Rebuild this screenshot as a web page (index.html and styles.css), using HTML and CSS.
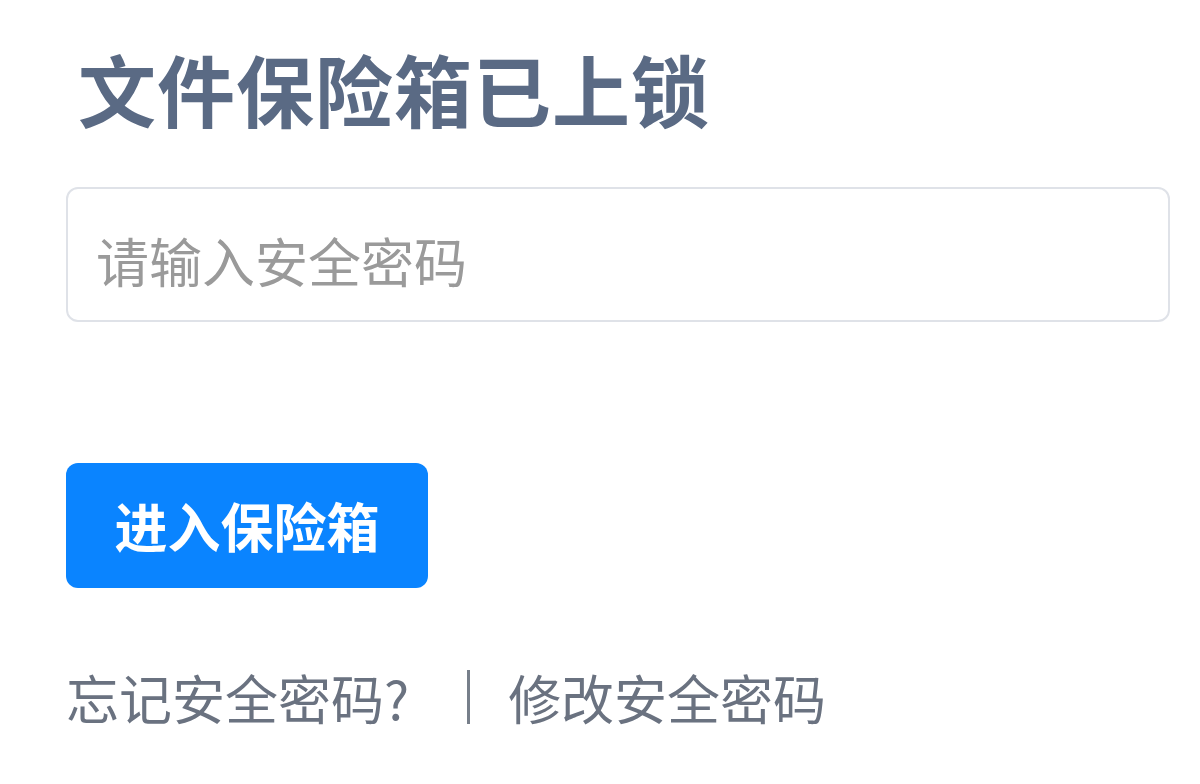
FILE: index.html
```html
<!DOCTYPE html>
<html lang="zh-CN">
<head>
<meta charset="utf-8">
<title>文件保险箱已上锁</title>
<link rel="stylesheet" href="styles.css">
</head>
<body>
<main class="vault">
  <h1 class="vault-title">文件保险箱已上锁</h1>
  <input class="vault-input" type="password" placeholder="请输入安全密码">
  <button class="vault-btn" type="button">进入保险箱</button>
  <div class="vault-links">
    <a class="vault-link" href="#">忘记安全密码?</a>
    <span class="vault-sep"></span>
    <a class="vault-link" href="#">修改安全密码</a>
  </div>
</main>
</body>
</html>
```

FILE: styles.css
```css
html, body {
  margin: 0;
  padding: 0;
  background: #ffffff;
}
body {
  font-family: "Noto Sans CJK SC", "Noto Sans", sans-serif;
  width: 1200px;
  height: 784px;
  overflow: hidden;
}
.vault {
  display: flex;
  flex-direction: column;
  align-items: flex-start;
  padding: 49px 0 0 66px;
}
.vault-title {
  margin: 0 0 0 12px;
  font-size: 78px;
  line-height: 1;
  font-weight: 700;
  color: #5a6a84;
  letter-spacing: 1px;
}
.vault-input {
  box-sizing: border-box;
  margin-top: 60px;
  width: 1104px;
  height: 135px;
  border: 2px solid #dfe2e8;
  border-radius: 12px;
  padding: 10px 0 0 28px;
  font-family: "Noto Sans CJK SC", "Noto Sans", sans-serif;
  font-size: 53px;
  color: #333;
  background: #fff;
  outline: none;
}
.vault-input::placeholder {
  color: #9a9a9a;
}
.vault-btn {
  margin-top: 141px;
  width: 362px;
  height: 125px;
  border: none;
  border-radius: 12px;
  background: #0a84ff;
  color: #ffffff;
  font-family: "Noto Sans CJK SC", "Noto Sans", sans-serif;
  font-size: 53px;
  font-weight: 700;
  line-height: 1;
  padding: 0;
}
.vault-links {
  margin-top: 82px;
  display: flex;
  align-items: center;
  font-size: 53px;
  line-height: 1;
}
.vault-link {
  color: #6a7280;
  text-decoration: none;
}
.vault-sep {
  width: 3px;
  height: 54px;
  background: #777f8a;
  margin: 0 38px 0 58px;
}
```
